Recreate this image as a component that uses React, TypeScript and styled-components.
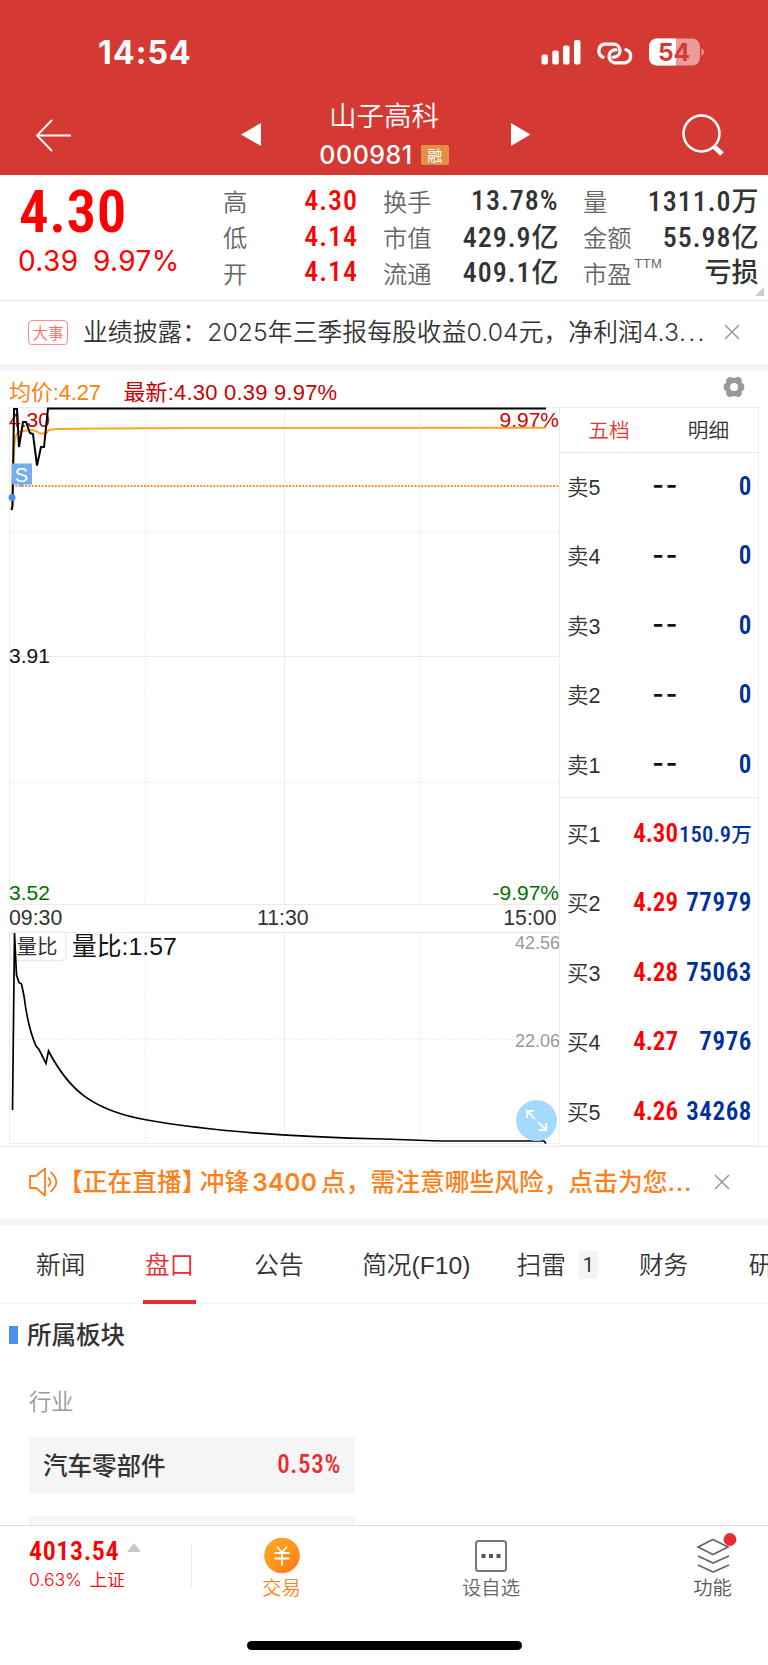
import React from "react";
import styled, { createGlobalStyle } from "styled-components";

const Global = createGlobalStyle`
  * { box-sizing: border-box; }
  body { margin: 0; background: #fff; }
`;
const cjk = `"Noto Sans CJK SC", sans-serif`;
const sans = `"Liberation Sans", ${cjk}`;

const Screen = styled.div`
  width: 768px; height: 1665px; overflow: hidden; display: flex; flex-direction: column;
  background: #fff; color: #333; font-family: ${sans}; line-height: 1; white-space: nowrap;
`;

const Header = styled.header`
  height: 174.5px; flex: none; background: #d43a33; color: #fff; display: flex; flex-direction: column;
`;
const StatusBar = styled.div`
  height: 98px; padding: 5px 64px 0 98px; display: flex; align-items: center; justify-content: space-between;
`;
const Clock = styled.div`font: 700 32px Inter, sans-serif; letter-spacing: 1.1px; padding-top: 2px;`;
const StatusIcons = styled.div`display: flex; align-items: center; svg { display: block; }`;

const TitleBar = styled.div`
  flex: 1; display: grid; grid-template-columns: 107px 1fr 107px; 
`;
const IconSlot = styled.div<{ $left: number; $top: number }>`
  padding: ${p => p.$top}px 0 0 ${p => p.$left}px; svg { display: block; }
`;
const TitleGroup = styled.div`
  display: grid; grid-template-columns: 21px 188px 21px; justify-content: center; gap: 31px; padding-left: 4px;
`;
const TitleText = styled.div`display: flex; flex-direction: column; align-items: center; padding-top: 2px;`;
const StockName = styled.div`font: 350 27.5px/28px ${cjk}; padding-right: 4px;`;
const StockCode = styled.div`
  display: flex; align-items: center; gap: 8px; margin-top: 14px; padding-right: 4px;
  font: 500 25px/26px Inter, sans-serif; letter-spacing: 0.5px;
`;
const MarginTag = styled.span`
  width: 28px; height: 20px; border-radius: 2px; background: #e38f46; font: 400 15px/19px ${cjk}; text-align: center;
  letter-spacing: 0;
`;

const Quote = styled.section`
  height: 126px; flex: none; border-bottom: 1px solid #ebebeb; display: flex; position: relative;
`;
const PriceBlock = styled.div`width: 223px; padding: 15px 0 0 18px; color: #f00;`;
const BigPrice = styled.div`font: 600 59px/44px Roboto, sans-serif; font-stretch: 75%; letter-spacing: 0.5px; padding-left: 1px;`;
const Change = styled.div`
  display: flex; gap: 14.5px; margin-top: 13px; font: 400 28px/28px Inter, sans-serif; letter-spacing: 0.4px;
`;
const StatColumn = styled.dl<{ $width: number; $gap: number }>`
  margin: 0 ${p => p.$gap}px 0 0; padding-top: 9px; width: ${p => p.$width}px; display: flex; flex-direction: column;
`;
const Stat = styled.div`
  height: 35.7px; display: flex; justify-content: space-between; align-items: center;
  dt { font: 350 24.3px/36px ${cjk}; color: #666; }
  sup { font: 400 13px/13px ${sans}; letter-spacing: 0.3px; vertical-align: 15px; margin-left: 3px; }
`;
const StatValue = styled.dd<{ $red?: boolean }>`
  margin: 0; font: 500 28px/36px Roboto, ${cjk}; font-stretch: 75%; letter-spacing: 1px; padding-bottom: 1px;
  color: ${p => (p.$red ? "#f00" : "#333")};
  span { font: 500 27px/36px ${cjk}; letter-spacing: 0; }
`;
const Corner = styled.svg`position: absolute; right: 4px; bottom: 4px;`;

const Banner = styled.section<{ $live?: boolean }>`
  height: ${p => (p.$live ? 71.5 : 63.5)}px; flex: none; display: flex; align-items: center;
  padding-left: 28px; font: ${p => (p.$live ? 500 : 350)} 24.75px/36px ${cjk};
  color: ${p => (p.$live ? "#ff7f1a" : "#333")};
  > svg { flex: none; display: block; }
`;
const EventTag = styled.span`
  width: 40px; height: 25px; border: 1px solid #ff8f8a; border-radius: 4px; color: #ff6b66;
  font: 350 15.5px/22px ${cjk}; text-align: center; margin-right: 15px;
`;
const Dots = styled.span<{ $spacing: number }>`letter-spacing: ${p => p.$spacing}px;`;
const Headline = styled.div<{ $width: number }>`
  width: ${p => p.$width}px; font-family: Inter, ${cjk}; flex: none; letter-spacing: 0.08px;
`;
const LiveText = styled.div`
  width: 656px; flex: none; display: flex; font-family: Inter, ${cjk};
  b { font-weight: 600; letter-spacing: 0.15px; margin: 0 4px 0 3px; font-size: 24.5px; }
`;
const Bracket = styled.span<{ $before: number; $after: number }>`
  flex: none; font-feature-settings: "halt"; margin: 0 ${p => p.$after}px 0 ${p => p.$before}px;
`;
const Strip = styled.div`height: 7px; flex: none; background: #f4f4f4;`;

const Market = styled.section`
  height: 775.5px; flex: none; display: flex; flex-direction: column; border-bottom: 1px solid #ececec;
`;
const InfoRow = styled.div`
  height: 36px; display: flex; justify-content: space-between; padding: 0 23px 0 9px; color: #cc0000;
  font: 400 22px/44px ${sans};
  svg { display: block; margin-top: 5px; }
`;
const InfoText = styled.span<{ $orange?: boolean }>`
  color: ${p => (p.$orange ? "#ff8010" : "#cc0000")}; margin-right: 22.5px; letter-spacing: ${p => (p.$orange ? -0.15 : 0.2)}px;
`;
const MarketBody = styled.div`height: 739px; display: flex;`;
const Plots = styled.div`width: 559px; position: relative; flex: none; svg { display: block; }`;
const ExpandButton = styled.button`
  position: absolute; right: 2px; top: 693px; width: 41px; height: 41px; border: 0; padding: 0; border-radius: 50%; background: #a6d9ff;
`;
const Book = styled.div`
  width: 200px; border: 1px solid #ececec; display: flex; flex-direction: column;
`;
const BookTabs = styled.div`
  height: 44.5px; flex: none; display: grid; grid-template-columns: 98px 101px; border-bottom: 1.5px solid #ececec;
  font: 350 20.7px/43px ${cjk}; text-align: center;
`;
const BookTab = styled.div<{ $active?: boolean }>`color: ${p => (p.$active ? "#e03a33" : "#333")};`;
const BookSide = styled.div<{ $ask?: boolean }>`
  height: ${p => (p.$ask ? 345.5 : 347)}px; flex: none; padding: ${p => (p.$ask ? 0 : 1.5)}px 7px 0 7px;
  border-bottom: ${p => (p.$ask ? "1px solid #ececec" : "0")};
`;
const BookRow = styled.div`height: 69.5px; display: grid; grid-template-columns: 44px 67px 74px; align-items: center;`;
const Level = styled.span`font: 350 21.5px/30px "Liberation Sans", ${cjk}; padding-top: 1px;`;
const Price = styled.span<{ $empty?: boolean }>`
  text-align: right; font: 600 25px/30px Roboto, sans-serif; font-stretch: 75%; color: #f00; padding-bottom: 1px;
  ${p => p.$empty && "color: #111; font-family: Inter, sans-serif; letter-spacing: 1.7px; margin-right: -1px; padding-bottom: 4px;"}
`;
const Volume = styled.span<{ $small?: boolean }>`
  text-align: right; justify-self: end; color: #00309c; letter-spacing: ${p => (p.$small ? 0.2 : 0.6)}px; padding-bottom: 1px;
  font: ${p => (p.$small ? 500 : 600)} ${p => (p.$small ? 22.5 : 25)}px/30px Roboto, ${cjk}; font-stretch: 75%;
  span { font: 500 20.5px/30px ${cjk}; }
`;

const Tabs = styled.nav`
  height: 79px; flex: none; border-bottom: 1.5px solid #f2f2f2; display: flex; padding-left: 36px;
  font: 350 24.7px/80px "Liberation Sans", ${cjk};
`;
const Tab = styled.div<{ $gap: number; $active?: boolean }>`
  margin-right: ${p => p.$gap}px; display: flex; align-items: center; position: relative; height: 79px; flex: none; padding-top: 2px;
  color: ${p => (p.$active ? "#ea2c30" : "#333")};
  ${p => p.$active && `&::after { content: ""; position: absolute; left: -2px; right: -2px; bottom: 0; height: 4px; background: #ea2c30; }`}
`;
const Count = styled.span`
  width: 19px; height: 28px; background: #f4f4f4; margin: -2px 0 0 13px; font: 400 20px/28px Roboto, sans-serif; text-align: center;
`;
const Sectors = styled.section`height: 221px; flex: none; overflow: hidden; padding-top: 12px;`;
const SectionTitle = styled.h2`
  margin: 0; display: flex; align-items: center; gap: 9px; padding-left: 9px; height: 36px; font: 500 24.5px/36px ${cjk};
  &::before { content: ""; width: 9px; height: 18px; background: #4790f0; margin-top: 1px; }
`;
const GroupLabel = styled.div`padding: 0 0 0 29px; margin-top: 31px; font: 350 22.3px/34px ${cjk}; color: #999;`;
const SectorCard = styled.div`
  width: 326px; height: 57px; margin: 19.5px 0 22px 29px; padding: 0 14px; border-radius: 3px; background: #f5f5f5;
  display: flex; justify-content: space-between; align-items: center; font: 500 24.5px/36px ${cjk};
`;
const SectorRate = styled.span`
  font: 500 25px/36px Roboto, sans-serif; font-stretch: 75%; color: #ea2c30; letter-spacing: 0.7px;
`;

const BottomNav = styled.nav`
  height: 79px; flex: none; border-top: 1.5px solid #dedede; display: grid; grid-template-columns: 192px 179px 240px 157px;
`;
const Index = styled.div`
  height: 43px; margin-top: 18px; padding-left: 29px; border-right: 1.5px solid #ebebeb; color: #f00;
`;
const IndexValue = styled.div`
  display: flex; align-items: center; gap: 8px; margin-top: -5px; font: 600 26px/24px Roboto, sans-serif; font-stretch: 75%;
  letter-spacing: 0.6px;
  svg { margin-top: -7px; }
`;
const IndexChange = styled.div`font: 350 17.6px/24px Inter, ${cjk}; margin-top: 5px; word-spacing: 3px;`;
const NavItem = styled.div<{ $color: string; $shift: number }>`
  display: flex; flex-direction: column; align-items: center; padding: 11px 0 0 ${p => p.$shift}px;
  color: ${p => p.$color}; font: 350 19.3px/28px ${cjk};
  svg { display: block; overflow: visible; margin-bottom: -2px; }
`;
const HomeArea = styled.div`flex: 1; display: flex; justify-content: center; align-items: flex-end; padding-bottom: 15px;`;
const HomeBar = styled.div`width: 275px; height: 9px; border-radius: 5px; background: #000;`;

const CloseIcon = () => (
  <svg width="16" height="16" viewBox="0 0 16 16"><path d="M1 1L15 15M15 1L1 15" stroke="#999" strokeWidth="1.5" /></svg>
);

const asks = ["卖5", "卖4", "卖3", "卖2", "卖1"];
const bids = [
  ["买1", "4.30", "150.9万"], ["买2", "4.29", "77979"], ["买3", "4.28", "75063"], ["买4", "4.27", "7976"], ["买5", "4.26", "34268"],
];
const stats = [
  { width: 135, gap: 25, red: true, rows: [["高", "4.30"], ["低", "4.14"], ["开", "4.14"]] },
  { width: 175.5, gap: 24.5, rows: [["换手", "13.78%"], ["市值", "429.9亿"], ["流通", "409.1亿"]] },
  { width: 175.5, gap: 0, rows: [["量", "1311.0万"], ["金额", "55.98亿"], ["市盈", "亏损"]] },
];

/* Splits a figure such as "429.9亿" into its digits and its unit. */
const Figure = ({ value }: { value: string }) => {
  const digits = value.replace(/[^\d.%]/g, "");
  const unit = value.slice(digits.length);
  return <>{digits}{unit && <span>{unit}</span>}</>;
};

const PriceChart = () => (
  <svg width="559" height="739" viewBox="0 407 559 739" fontFamily="Liberation Sans, Noto Sans CJK SC, sans-serif" fontSize="21">
    <g stroke="#ececec" strokeWidth="1" fill="none">
      <path d="M9.5 407.5H559M9.5 407.5V904.5M9.5 656.5H559M284.5 407.5V904.5M9.5 904.5H559" />
      <path d="M9.5 932.5H559M9.5 932.5V1143.5H559M284.5 932.5V1143.5" />
      <path d="M145.5 407.5V904.5M420.5 407.5V904.5M9.5 532.5H559M9.5 782.5H559M145.5 932.5V1143.5M420.5 932.5V1143.5M9.5 1039.5H559" strokeDasharray="1.5 1.8" strokeWidth="1.5" />
    </g>
    <text x="9" y="427" fill="#cc0000">4.30</text>
    <text x="559" y="427" fill="#cc0000" textAnchor="end">9.97%</text>
    <text x="9" y="663" fill="#111">3.91</text>
    <text x="9" y="900" fill="#007000">3.52</text>
    <text x="559" y="900" fill="#007000" textAnchor="end">-9.97%</text>
    <g fill="#333" fontSize="21.300">
      <text x="9" y="925">09:30</text>
      <text x="257" y="925">11:30</text>
      <text x="556.500" y="925" textAnchor="end">15:00</text>
    </g>
    <path d="M12 486H559" stroke="#ff8a33" strokeWidth="1.8" strokeDasharray="1.8 1.5" />
    <path d="M12 510L13 470L14.500 443L16 436L18 432L24 431L32 430L36 431L40 433.500L46 433.500L49 430L56 429L100 428.500L200 428L546 427.800" fill="none" stroke="#ffa426" strokeWidth="2" />
    <path d="M11.500 510L12.500 506L14 409H17L19 447L23 422H26L30 433L33 434L37 465.500L41 447H44L48 408.500H546" fill="none" stroke="#000" strokeWidth="2" />
    <path d="M11.500 463.500h20.500v21h-8l-2.500 3l-2.500-3h-7.500z" fill="#75aef0" />
    <text x="21.500" y="481.500" fill="#fff" fontSize="20" textAnchor="middle">S</text>
    <circle cx="12" cy="497.500" r="3.500" fill="#4790f0" />
    <rect x="10" y="932" width="56" height="28.500" rx="4" fill="#fff" stroke="#e9e9e9" strokeWidth="1.500" />
    <text x="16.500" y="954" fill="#333" fontSize="20.500">量比</text>
    <text x="72" y="955" fill="#111" fontSize="24.800">量比:1.57</text>
    <g fill="#999" fontSize="18" textAnchor="end">
      <text x="560" y="949">42.56</text>
      <text x="560" y="1046.500">22.06</text>
    </g>
    <path d="M12.500 1110L14.500 933L16.500 975L19 982.500L21.500 984L24 996C27 1020 32 1037 36 1046L39 1049.500L46 1063.500L48.500 1051C68 1088 90 1110 147 1120C210 1131 290 1137 384 1139L440 1141H544L546 1143.500" fill="none" stroke="#000" strokeWidth="1.700" />
  </svg>
);

export default function App() {
  return (
    <Screen>
      <Global />
      <Header>
        <StatusBar>
          <Clock>14:54</Clock>
          <StatusIcons>
            <svg width="163" height="28" viewBox="541 37.5 163 28">
              <g fill="#fff">
                <rect x="541.500" y="54" width="6.500" height="10" rx="2" /><rect x="552.300" y="50" width="6.500" height="14" rx="2" />
                <rect x="563" y="45" width="6.500" height="19" rx="2" /><rect x="574" y="39.500" width="6.500" height="24.500" rx="2" />
              </g>
              <g fill="none" stroke="#fff" strokeWidth="3.300" strokeLinecap="round">
                <path d="M603 56.700A6.900 6.900 0 0 1 604 43.700H614.500A6.600 6.600 0 0 1 614.500 56.700H613" />
                <path d="M626 49.300A6.700 6.700 0 0 1 625 62.300H614.500A6.600 6.600 0 0 1 614.500 49.300H616" />
              </g>
              <rect x="649" y="38" width="51" height="27" rx="8" fill="#e99c98" />
              <path d="M657 38H676V65H657A8 8 0 0 1 649 57V46A8 8 0 0 1 657 38Z" fill="#fff" />
              <path d="M701.500 47.500Q704 49 704 51.500T701.500 55.500Z" fill="#e99c98" />
              <text x="674" y="60.300" textAnchor="middle" fontFamily="Inter" fontWeight="700" fontSize="24.500" fill="#d43a33">54</text>
            </svg>
          </StatusIcons>
        </StatusBar>
        <TitleBar>
          <IconSlot $left={35} $top={21}>
            <svg width="37" height="33" viewBox="0 0 37 33" fill="none" stroke="#fff" strokeWidth="1.800"><path d="M17 1L2 16.500L17 32M2 16.500H36" /></svg>
          </IconSlot>
          <TitleGroup>
            <IconSlot $left={1} $top={25}><svg width="20" height="23"><path d="M20 0V23L0 11.500Z" fill="#fff" /></svg></IconSlot>
            <TitleText>
              <StockName>山子高科</StockName>
              <StockCode>000981<MarginTag>融</MarginTag></StockCode>
            </TitleText>
            <IconSlot $left={0} $top={25}><svg width="20" height="23"><path d="M0 0V23L19.500 11.500Z" fill="#fff" /></svg></IconSlot>
          </TitleGroup>
          <IconSlot $left={20} $top={15}>
            <svg width="44" height="44" fill="none" stroke="#fff"><circle cx="20.500" cy="20.500" r="18" strokeWidth="2.500" /><path d="M32.500 33L41 41" strokeWidth="5" /></svg>
          </IconSlot>
        </TitleBar>
      </Header>

      <Quote>
        <PriceBlock>
          <BigPrice>4.30</BigPrice>
          <Change><span>0.39</span><span>9.97%</span></Change>
        </PriceBlock>
        {stats.map((col, i) => (
          <StatColumn key={i} $width={col.width} $gap={col.gap}>
            {col.rows.map(([label, value]) => (
              <Stat key={label}>
                <dt>{label}{label === "市盈" && <sup>TTM</sup>}</dt>
                <StatValue $red={col.red}><Figure value={value} /></StatValue>
              </Stat>
            ))}
          </StatColumn>
        ))}
        <Corner width="9" height="9"><path d="M9 0V9H0Z" fill="#ccc" /></Corner>
      </Quote>

      <Banner>
        <EventTag>大事</EventTag>
        <Headline $width={641}>业绩披露：2025年三季报每股收益0.04元，净利润4.3<Dots $spacing={2.2}>...</Dots></Headline>
        <CloseIcon />
      </Banner>
      <Strip />

      <Market>
        <InfoRow>
          <div><InfoText $orange>均价:4.27</InfoText><InfoText>最新:4.30 0.39 9.97%</InfoText></div>
          <svg width="22" height="22" viewBox="0 0 22 22">
            <path d="M6.500 1.500L9 2.500H13L15.500 1.500L18 3.500V7L20.500 9V13L18 15V18.500L15.500 20.500L13 19.500H9L6.500 20.500L4 18.500V15L1.500 13V9L4 7V3.500Z" fill="#999" stroke="#999" strokeWidth="1.500" strokeLinejoin="round" />
            <circle cx="11" cy="11" r="4" fill="#fff" />
          </svg>
        </InfoRow>
        <MarketBody>
          <Plots>
            <PriceChart />
            <ExpandButton aria-label="全屏">
              <svg width="41" height="41" fill="none" stroke="#fff" strokeWidth="1.800"><path d="M11 18V11H18M11 11L19 19M30 23V30H23M30 30L22 22" /></svg>
            </ExpandButton>
          </Plots>
          <Book>
            <BookTabs><BookTab $active>五档</BookTab><BookTab>明细</BookTab></BookTabs>
            <BookSide $ask>
              {asks.map(a => <BookRow key={a}><Level>{a}</Level><Price $empty>--</Price><Volume>0</Volume></BookRow>)}
            </BookSide>
            <BookSide>
              {bids.map(([l, p, v]) => (
                <BookRow key={l}><Level>{l}</Level><Price>{p}</Price><Volume $small={v.endsWith("万")}><Figure value={v} /></Volume></BookRow>
              ))}
            </BookSide>
          </Book>
        </MarketBody>
      </Market>

      <Banner $live>
        <svg width="30" height="30" viewBox="0 0 30 30" fill="none" stroke="#ff7f1a" strokeWidth="1.800" strokeLinejoin="round">
          <path d="M2 9H8L17 1.500V28.500L8 21H2ZM20 10.500Q25 15 20 19.500M22.500 5Q34 15 22.500 25" />
        </svg>
        <LiveText>
          <Bracket $before={12.4} $after={0}>【</Bracket>正在直播<Bracket $before={0} $after={5.5}>】</Bracket>
          冲锋<b>3400</b><span>点，需注意哪些风险，点击为您</span><Dots $spacing={0.8}>...</Dots>
        </LiveText>
        <CloseIcon />
      </Banner>
      <Strip />

      <Tabs>
        <Tab $gap={59.5}>新闻</Tab>
        <Tab $gap={60} $active>盘口</Tab>
        <Tab $gap={58.5}>公告</Tab>
        <Tab $gap={46}>简况(F10)</Tab>
        <Tab $gap={41}>扫雷<Count>1</Count></Tab>
        <Tab $gap={60.5}>财务</Tab>
        <Tab $gap={0}>研报</Tab>
      </Tabs>

      <Sectors>
        <SectionTitle>所属板块</SectionTitle>
        <GroupLabel>行业</GroupLabel>
        <SectorCard>汽车零部件<SectorRate>0.53%</SectorRate></SectorCard>
        <SectorCard />
      </Sectors>

      <BottomNav>
        <Index>
          <IndexValue>4013.54<svg width="14" height="9"><path d="M7 0L14 9H0Z" fill="#c8c8c8" /></svg></IndexValue>
          <IndexChange>0.63% 上证</IndexChange>
        </Index>
        <NavItem $color="#ff861f" $shift={0}>
          <svg width="36" height="38" viewBox="0 0 36 38">
            <defs><linearGradient id="coin" x1="0" y1="0" x2="1" y2="1"><stop offset="0" stopColor="#ffad22" /><stop offset="1" stopColor="#ff7a18" /></linearGradient></defs>
            <circle cx="18" cy="18.500" r="17.800" fill="url(#coin)" />
            <path d="M13 9.500L18 15.500L23 9.500M10.500 16H25.500M10.500 21.500H25.500M18 15.500V28.500" fill="none" stroke="#fff" strokeWidth="1.800" />
          </svg>
          交易
        </NavItem>
        <NavItem $color="#666" $shift={0}>
          <svg width="32" height="38" viewBox="0 0 32 38">
            <rect x="1" y="4" width="30" height="30" rx="2.500" fill="none" stroke="#777" strokeWidth="2" />
            <path d="M6.500 17h4v4h-4zM14 17h4v4h-4zM21.500 17h4v4h-4z" fill="#555" />
          </svg>
          设自选
        </NavItem>
        <NavItem $color="#555" $shift={46}>
          <svg width="34" height="38" viewBox="0 0 34 38" fill="none" stroke="#666" strokeWidth="1.700">
            <path d="M17 2.500L32 10L17 17.500L2 10ZM2 19L17 26L33 19M2 28L17 35L33 28" />
            <circle cx="34" cy="2.500" r="6.400" fill="#ea2c30" stroke="none" />
          </svg>
          功能
        </NavItem>
      </BottomNav>
      <HomeArea><HomeBar /></HomeArea>
    </Screen>
  );
}
